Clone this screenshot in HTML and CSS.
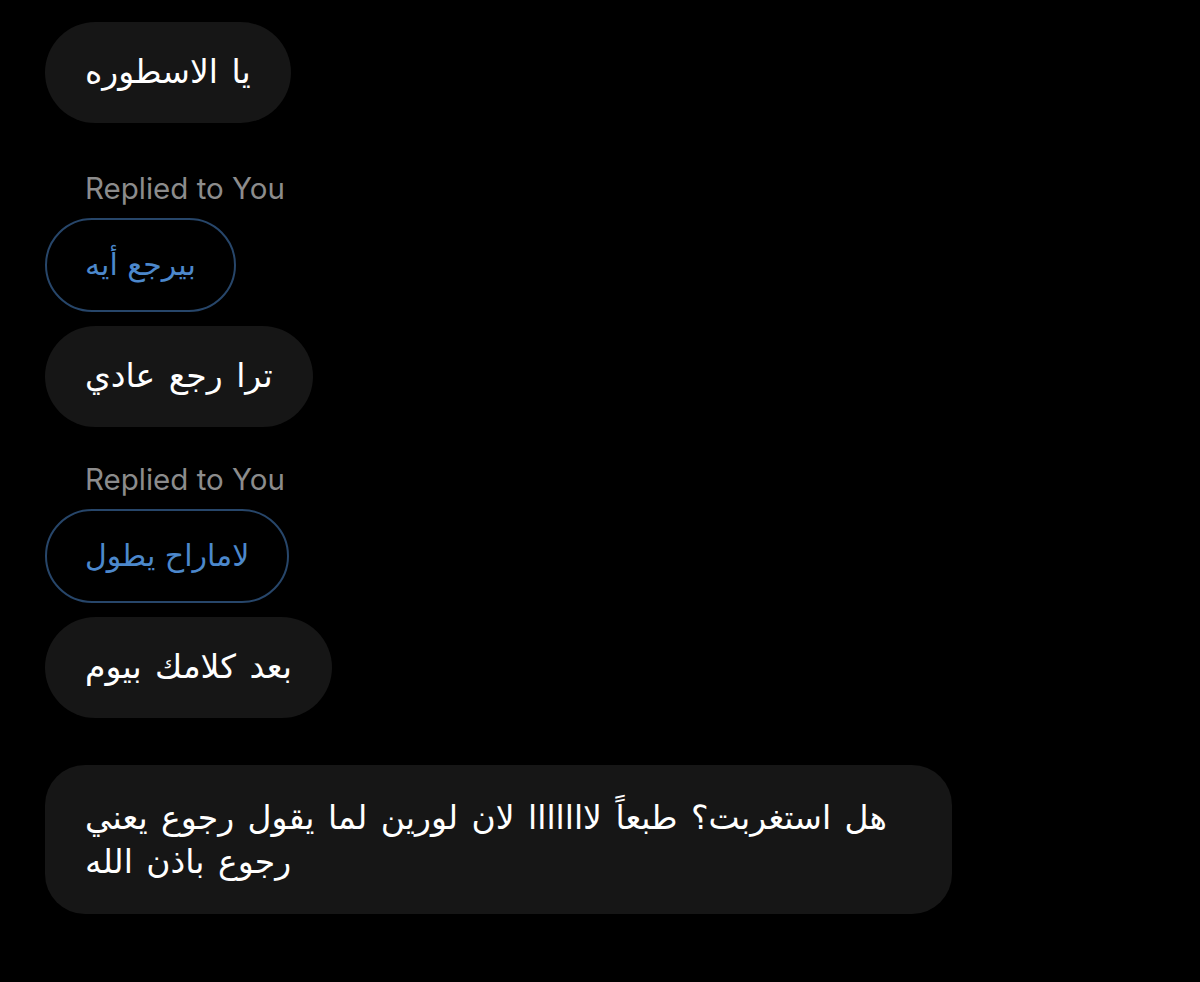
FILE: index.html
```html
<!DOCTYPE html>
<html lang="ar">
<head>
<meta charset="utf-8">
<link rel="stylesheet" href="styles.css">
</head>
<body>
<div class="chat">
  <div class="bubble b1" dir="rtl">يا الاسطوره</div>
  <div class="replied">Replied to You</div>
  <div class="reply r1" dir="rtl">بيرجع أيه</div>
  <div class="bubble b2" dir="rtl">ترا رجع عادي</div>
  <div class="replied">Replied to You</div>
  <div class="reply r2" dir="rtl">لاماراح يطول</div>
  <div class="bubble b3" dir="rtl">بعد كلامك بيوم</div>
  <div class="bubble long" dir="rtl">هل استغربت؟ طبعاً لااااااا لان لورين لما يقول رجوع يعني رجوع باذن الله</div>
</div>
</body>
</html>
```

FILE: styles.css
```css
html, body {
  margin: 0;
  padding: 0;
  background: #000;
}
body {
  width: 1200px;
  height: 982px;
  overflow: hidden;
  font-family: "DejaVu Sans", "Noto Sans", sans-serif;
}
.chat {
  display: flex;
  flex-direction: column;
  align-items: flex-start;
  padding: 22px 0 0 45px;
}
.bubble {
  background: #161616;
  color: #fff;
  font-size: 33px;
  line-height: 44px;
  word-spacing: 3px;
  padding: 28px 40px 29px;
  border-radius: 51px;
}
.b1 { margin-bottom: 47px; }
.b2 { margin-bottom: 34px; }
.b3 { margin-bottom: 47px; }
.replied {
  font-family: "Inter", "Liberation Sans", sans-serif;
  color: #8c8c8c;
  font-size: 29.5px;
  line-height: 36px;
  padding-left: 40px;
  margin-bottom: 12px;
}
.reply {
  color: #4c88cc;
  font-size: 30px;
  line-height: 44px;
  padding: 23px 38px 23px;
  border: 2px solid #27466a;
  border-radius: 48px;
  margin-bottom: 14px;
}
.long {
  width: 827px;
  text-align: left;
  border-radius: 40px;
  padding: 31px 40px 30px;
}
```
